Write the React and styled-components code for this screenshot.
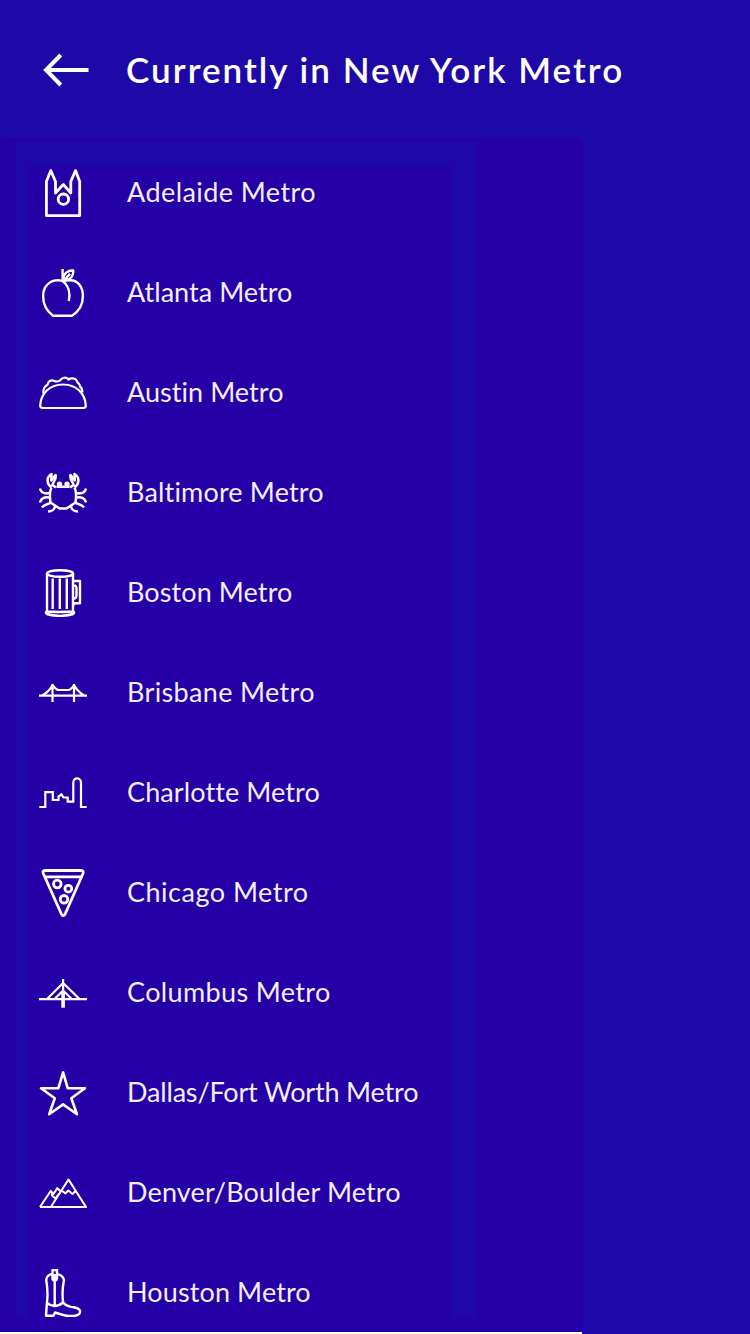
import React from 'react';
import styled, { createGlobalStyle } from 'styled-components';

const GlobalStyle = createGlobalStyle`
  * { box-sizing: border-box; }
  body { margin: 0; background: #fff; overflow: hidden; }
`;

const Page = styled.main`
  width: 750px;
  height: 1334px;
  display: flex;
  flex-direction: column;
  background: #1e09a8;
  color: #fff;
  font-family: Lato, 'Liberation Sans', sans-serif;
  overflow: hidden;
`;

const Header = styled.header`
  height: 138px;
  flex: none;
  display: flex;
  align-items: center;
  gap: 36px;
  padding: 2px 0 0 42px;
`;

const BackButton = styled.button`
  width: 48px;
  height: 40px;
  padding: 0;
  border: 0;
  background: none;
  color: inherit;
  svg { display: block; }
`;

const Title = styled.h1`
  margin: -2px 0 0;
  font-size: 35px;
  line-height: 44px;
  font-weight: 600;
  letter-spacing: 2.03px;
  white-space: nowrap;
`;

const Panel = styled.section`
  width: 582px;
  height: 1194px;
  flex: none;
  padding: 4px 0 0 15px;
  background: #2400a6;
`;

const Frame = styled.div`
  width: 462px;
  height: 1176px;
  padding: 24px 25px 0 13px;
  background: #1e09a8;
`;

const CityList = styled.ul`
  height: 1152px;
  margin: 0;
  padding: 3px 0 0 11px;
  list-style: none;
  display: flex;
  flex-direction: column;
  gap: 52px;
  background: #2400a6;
`;

const CityRow = styled.li`
  height: 48px;
  flex: none;
  display: flex;
  align-items: center;
  gap: 40px;
`;

const CityIcon = styled.svg`
  width: 48px;
  height: 48px;
  flex: none;
  fill: none;
  stroke: #fff;
  stroke-width: ${(p) => p.$weight || 2.2}px;
  stroke-linejoin: ${(p) => p.$join || 'round'};
`;

const Mast = styled.path`
  stroke-width: 3.6px;
`;

const CityName = styled.span`
  font-size: 27px;
  line-height: 34px;
  margin-top: -2px;
  color: #f3efff;
  letter-spacing: ${(p) => p.$spacing}px;
  white-space: nowrap;
`;

const BottomStrip = styled.div`
  width: 582px;
  height: 2px;
  background: #fff;
`;

const cities = [
  {
    name: 'Adelaide Metro', spacing: 0.43, weight: 2.8, join: 'round',
    art: <><path d="M7.400 46.600V12.500L11.800 1.600 16.500 12.500V24L24.300 15.500 31.800 24V12.500L36.500 1.600 40.700 12.500V46.600Z" /><circle cx="24.400" cy="30.200" r="5.200" /></>,
  },
  {
    name: 'Atlanta Metro', spacing: 0.04, weight: 2.4,
    art: <><path d="M23 11.600C18 10.800 15 11 12 12.800 7 15.600 4.100 20 4.100 27 4.100 36 9 43 14 46.700H33C39 43 43.900 36 43.900 27 43.900 17 38 11 31 11.200 28 11.300 25.500 11.800 23 11.600 27 14 30.400 19.500 30.400 26Q30.400 29 29.700 32" /><path d="M23.600 0V10.600M24.600 10.600C24 4.500 29 1 34.200 1.500 34.800 7.500 31 11.200 26 10.200L31 4.800" /></>,
  },
  {
    name: 'Austin Metro', spacing: 0.05,
    art: <><path d="M1.200 36.500C2 24 11 15.500 24 15.500S46 24 46.800 36.500Q46.800 39 44.500 39H3.500Q1.200 39 1.200 36.500Z" /><path d="M4.300 24.500C4 19 6 17 8.500 15.800 9 12 12 10.500 15.500 12Q18 13.200 21 11.500C23 8.500 27 7.500 29.500 10.500 32 8.800 36 9 37.700 11.500 37.500 14 41.500 14.500 41 17.500 42.500 18.500 43.200 20 43.500 23.500" /></>,
  },
  {
    name: 'Baltimore Metro', spacing: 0.17, weight: 2.5,
    art: (
      <>
        <path d="M12.500 18.500C10.300 23 10.800 29 11.500 33.500Q16 36.500 20.500 39.500H27.500Q32 36.500 36.500 33.500C37.200 29 37.700 23 35.500 18.500M17.500 17.800H30.500" />
        <path d="M12.500 18.500C7 14 7.500 8 12.500 5L12.300 11.500 16.500 6C18 10.500 13.500 13.500 13.500 16L17 18.500M11 24C6 25 2 23.500 1 19.500M11.500 28.800C6 27.500 2 29 1 33.500M12 33.500C8.500 36 6 34.500 3 38.500M16 36.500C16 40 13 42.500 9 42.500" />
        <path d="M35.500 18.500C41 14 40.500 8 35.500 5L35.700 11.500 31.500 6C30 10.500 34.500 13.500 34.500 16L31 18.500M37 24C42 25 46 23.500 47 19.500M36.500 28.800C42 27.500 46 29 47 33.500M36 33.500C39.500 36 42 34.500 45 38.500M32 36.500C32 40 35 42.500 39 42.500" />
        <circle cx="20.500" cy="15.200" r="1.400" />
        <circle cx="28" cy="15.200" r="1.400" />
      </>
    ),
  },
  {
    name: 'Boston Metro', spacing: 0.1, weight: 2.4,
    art: <><ellipse cx="21" cy="4.500" rx="13" ry="3.300" /><path d="M8 4.500V42.500C6.500 43 6.500 44 8 45 15 47.500 27 47.500 34 45 35.500 44 35.500 43 34 42.500V4.500M34 12H41V34.200H36L34 36.200M33.500 16.500C37.500 16 37.500 17.500 37.500 20V26C37.500 29 36.500 30 33.500 30M13.700 9.500V40M20.800 9.500V40M27.800 9.500V40M8 42.500Q21 43.500 34 42.500" /></>,
  },
  {
    name: 'Brisbane Metro', spacing: 0.35,
    art: <path d="M0 26.700H48M13.500 15V32.900M35 15V32.900M3 26.500Q10 23 13.500 16 17 21 20 21H29Q32 21 35 16 38 22 45 26.500" />,
  },
  {
    name: 'Charlotte Metro', spacing: 0.1, join: 'miter',
    art: <path d="M.3 38H6.300V23.200H13.800V31H19.500V27.500L22.400 25.300 24.500 28.500H28.700V32.600H34.300V13.800C34.300 8 42 8 42 13.800V38H47.700" />,
  },
  {
    name: 'Chicago Metro', spacing: 0.5, weight: 2.8,
    art: <><path d="M6 1.500H42Q45.200 1.500 43.800 5L26 45.300Q24.300 48 22.500 45.300L4.500 5Q3 1.500 6 1.500ZM5.500 7.800H42.500" /><circle cx="18.300" cy="15" r="3.800" /><circle cx="29.300" cy="19.700" r="3.400" /><circle cx="25" cy="30.300" r="3.800" /></>,
  },
  {
    name: 'Columbus Metro', spacing: 0.36,
    art: <><path d="M0 30.200H48M24.100 10V30M8.500 29.500L24.100 14 40 29.500M16 29.500L24.100 21.500 32.200 29.500" /><Mast d="M24.100 24V38.700" /></>,
  },
  {
    name: 'Dallas/Fort Worth Metro', spacing: -0.18, weight: 2.6, join: 'round',
    art: <path d="M24.100 3.300L28.700 19.200H46L32.300 29.200 38 45.200 24.100 35.400 10.200 45.200 15.800 29.200 2 19.200H19.400Z" />,
  },
  {
    name: 'Denver/Boulder Metro', spacing: 0.15, weight: 2.1,
    art: <path d="M1 38H47L29.500 10.500 11.800 38M1 38L11.700 22 14.500 25 18.300 19.200 21.300 22M22.500 21.500L26.500 24.300 29.300 21.500 33.500 25 36.500 22M13.300 23.500L13 26.500 16.500 29.500 20 24.500" />,
  },
  {
    name: 'Houston Metro', spacing: 0.12, weight: 2.4,
    art: <path d="M13 4.800C10 5.500 7.500 8 7.200 11 8.800 20 8.800 28 7.800 35L7 46.800H14.500L16 43.500C22 45 24 47 30 47 38 47 41 46 41.200 42.500 40 37.500 35 39 31 37.500 27 36.500 24.500 35 24 32.500 23 24 23.500 18 25 11 24.500 8 21 5.500 18.300 4.800M13.500 1H18V9Q18 11.500 15.700 11.500T13.500 9ZM15.700 5V37M8 34Q11.500 37 15.700 37T24 33.500" />,
  },
];

export default function App() {
  return (
    <>
      <GlobalStyle />
      <Page>
        <Header>
          <BackButton aria-label="Back">
            <svg width="48" height="40" viewBox="0 0 48 40" fill="none" stroke="#fff" strokeWidth="4">
              <path d="M46.500 20H4M18.800 5L4 20 18.800 35" />
            </svg>
          </BackButton>
          <Title>Currently in New York Metro</Title>
        </Header>
        <Panel>
          <Frame>
            <CityList>
              {cities.map((c) => (
                <CityRow key={c.name}>
                  <CityIcon viewBox="0 0 48 48" $weight={c.weight} $join={c.join} aria-hidden="true">{c.art}</CityIcon>
                  <CityName $spacing={c.spacing}>{c.name}</CityName>
                </CityRow>
              ))}
            </CityList>
          </Frame>
        </Panel>
        <BottomStrip />
      </Page>
    </>
  );
}
